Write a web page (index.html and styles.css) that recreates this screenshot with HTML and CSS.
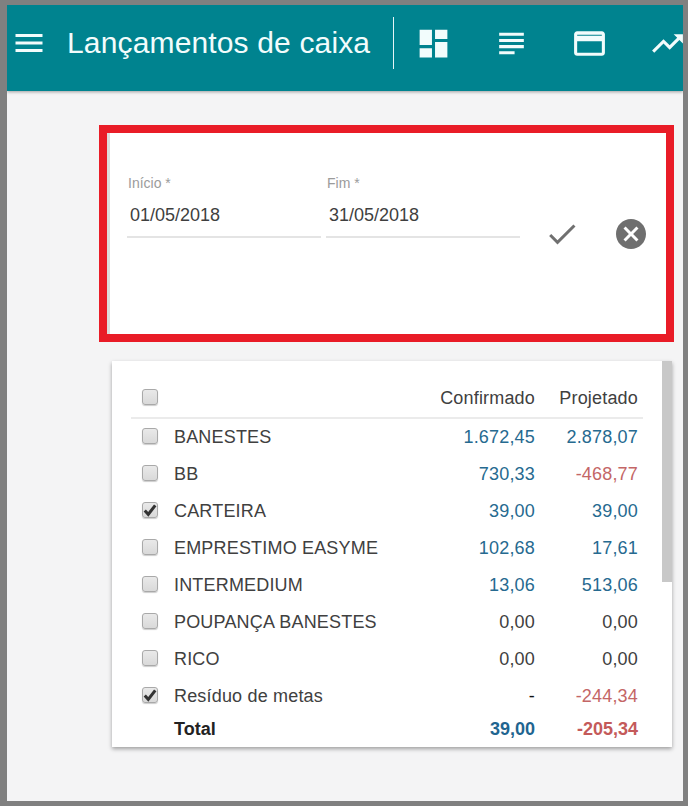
FILE: index.html
```html
<!DOCTYPE html>
<html lang="pt">
<head>
<meta charset="utf-8">
<title>Lançamentos de caixa</title>
<link rel="stylesheet" href="styles.css">
</head>
<body>
<div class="frame">
  <header class="topbar">
    <svg class="icon menu" viewBox="0 0 24 24"><path d="M3 18h18v-2H3v2zm0-5h18v-2H3v2zm0-7v2h18V6H3z"/></svg>
    <h1 class="title">Lançamentos de caixa</h1>
    <span class="divider"></span>
    <nav class="tabs">
      <svg class="icon tab" viewBox="0 0 24 24"><path d="M3 13h8V3H3v10zm0 8h8v-6H3v6zm10 0h8V11h-8v10zm0-18v6h8V3h-8z"/></svg>
      <svg class="icon tab" viewBox="0 0 24 24"><path d="M14 17H4v2h10v-2zm6-8H4v2h16V9zM4 15h16v-2H4v2zM4 5v2h16V5H4z"/></svg>
      <svg class="icon tab" viewBox="0 0 24 24"><path fill-rule="evenodd" d="M4 4C2.89 4 2.01 4.89 2.01 6L2 18c0 1.11.89 2 2 2h16c1.11 0 2-.89 2-2V6c0-1.11-.89-2-2-2H4zm0 6.6h16v7.4H4v-7.4zM4 6.4h16v.5H4v-.5z"/></svg>
      <svg class="icon tab" viewBox="0 0 24 24"><path d="M16 6l2.29 2.29-4.88 4.88-4-4L2 16.59 3.41 18l6-6 4 4 6.3-6.29L22 12V6z"/></svg>
    </nav>
  </header>
  <main class="content">
    <section class="filter">
      <div class="filter-inner">
        <div class="field">
          <label class="field-label">Início *</label>
          <div class="field-value">01/05/2018</div>
        </div>
        <div class="field">
          <label class="field-label">Fim *</label>
          <div class="field-value">31/05/2018</div>
        </div>
        <svg class="check-icon" viewBox="0 0 24 24"><path d="M9 16.17L4.83 12l-1.42 1.41L9 19 21 7l-1.41-1.41z"/></svg>
        <svg class="cancel-icon" viewBox="0 0 24 24"><path d="M12 2C6.47 2 2 6.47 2 12s4.47 10 10 10 10-4.47 10-10S17.53 2 12 2zm5 13.59L15.59 17 12 13.41 8.41 17 7 15.59 10.59 12 7 8.41 8.41 7 12 10.59 15.59 7 17 8.41 13.41 12 17 15.59z"/></svg>
      </div>
    </section>
    <section class="card">
      <div class="scroll-thumb"></div>
      <div class="row head">
        <span class="box"></span><span></span>
        <span class="num">Confirmado</span><span class="num">Projetado</span>
      </div>
      <div class="row"><span class="box"></span><span class="name">BANESTES</span><span class="num pos">1.672,45</span><span class="num pos">2.878,07</span></div>
      <div class="row"><span class="box"></span><span class="name">BB</span><span class="num pos">730,33</span><span class="num neg">-468,77</span></div>
      <div class="row"><span class="box"><svg class="tick" viewBox="0 0 12 12"><path d="M1.5 6.5l3 3.2L10.5 2"/></svg></span><span class="name">CARTEIRA</span><span class="num pos">39,00</span><span class="num pos">39,00</span></div>
      <div class="row"><span class="box"></span><span class="name">EMPRESTIMO EASYME</span><span class="num pos">102,68</span><span class="num pos">17,61</span></div>
      <div class="row"><span class="box"></span><span class="name">INTERMEDIUM</span><span class="num pos">13,06</span><span class="num pos">513,06</span></div>
      <div class="row"><span class="box"></span><span class="name">POUPANÇA BANESTES</span><span class="num">0,00</span><span class="num">0,00</span></div>
      <div class="row"><span class="box"></span><span class="name">RICO</span><span class="num">0,00</span><span class="num">0,00</span></div>
      <div class="row"><span class="box"><svg class="tick" viewBox="0 0 12 12"><path d="M1.5 6.5l3 3.2L10.5 2"/></svg></span><span class="name">Resíduo de metas</span><span class="num dash">-</span><span class="num neg">-244,34</span></div>
      <div class="row total"><span></span><span class="name">Total</span><span class="num pos">39,00</span><span class="num neg">-205,34</span></div>
    </section>
  </main>
</div>
</body>
</html>
```
FILE: styles.css
```css
* { box-sizing: border-box; }
html, body { margin: 0; height: 100%; }
body {
  background: #808080;
  padding: 5px 5px 5px 7px;
  font-family: "Liberation Sans", Arial, sans-serif;
  color: #3c3c3c;
  overflow: hidden;
}
.frame { height: 796px; background: #f4f4f5; overflow: hidden; }
.topbar {
  height: 86px;
  background: #00838f;
  box-shadow: 0 1px 3px rgba(0,0,0,.35);
  display: flex;
  align-items: flex-start;
  color: #fff;
  overflow: hidden;
}
.icon { fill: #f2fcfc; flex: none; display: block; }
.menu { width: 36px; height: 36px; margin: 20px 0 0 4px; }
.title {
  margin: 17px 0 0 20px;
  font-size: 30px;
  line-height: 42px;
  font-weight: 400;
  letter-spacing: .15px;
  color: #f2fcfc;
  white-space: nowrap;
}
.divider { width: 1px; height: 52px; margin: 12px 0 0 23px; background: #e6f5f6; flex: none; }
.tabs { display: flex; gap: 41px; margin: 20px 0 0 21px; }
.tab { width: 37px; height: 37px; }
.content { padding: 34px 9px 0 92px; }
.filter {
  width: 575px;
  height: 217px;
  border: 8px solid #e91c27;
  background: #fff;
}
.filter-inner {
  height: 100%;
  border-left: 3px solid #dcdcdc;
  display: flex;
  align-items: flex-start;
  padding: 42px 0 0 17px;
}
.field { width: 194px; margin-right: 5px; border-bottom: 2px solid #e4e4e4; height: 63px; }
.field-label { display: block; font-size: 14px; line-height: 16px; color: #9b9b9b; padding-left: 1px; }
.field-value { font-size: 18px; line-height: 20px; margin-top: 14px; padding-left: 3px; color: #3f3f3f; }
.check-icon { width: 36px; height: 36px; fill: #707070; margin: 41px 0 0 19px; flex: none; }
.cancel-icon { width: 36px; height: 36px; fill: #6f6f6f; margin: 41px 0 0 33px; flex: none; }
.card {
  position: relative;
  width: 560px;
  height: 386px;
  margin: 19px 0 0 13px;
  background: #fff;
  box-shadow: 0 2px 4px rgba(0,0,0,.35);
  padding: 18px 29px 0 19px;
}
.scroll-thumb { position: absolute; top: 0; right: 0; width: 10px; height: 221px; background: #c8c8c8; }
.row {
  display: grid;
  grid-template-columns: 43px 1fr 125px 103px;
  align-items: center;
  height: 37px;
  font-size: 18px;
  letter-spacing: .18px;
  color: #404040;
}
.head { height: 40px; padding-top: 1px; border-bottom: 2px solid #ebebeb; }
.num { text-align: right; padding-right: 5px; }
.pos { color: #266a90; }
.neg { color: #c46666; }
.dash { color: #111; }
.total { height: 29px; font-weight: 700; color: #222; letter-spacing: 0; }
.total .pos { color: #1f6590; }
.total .neg { color: #c45a5a; }
.box {
  width: 16px;
  height: 16px;
  margin: 0 0 4px 11px;
  border-radius: 3px;
  border: 1px solid #a9a9a9;
  background: linear-gradient(#e9e9e9, #d9d9d9);
  box-shadow: 0 1px 1px rgba(0,0,0,.2);
  display: flex;
}
.tick { width: 14px; height: 14px; fill: none; stroke: #333; stroke-width: 2.6; }
```
